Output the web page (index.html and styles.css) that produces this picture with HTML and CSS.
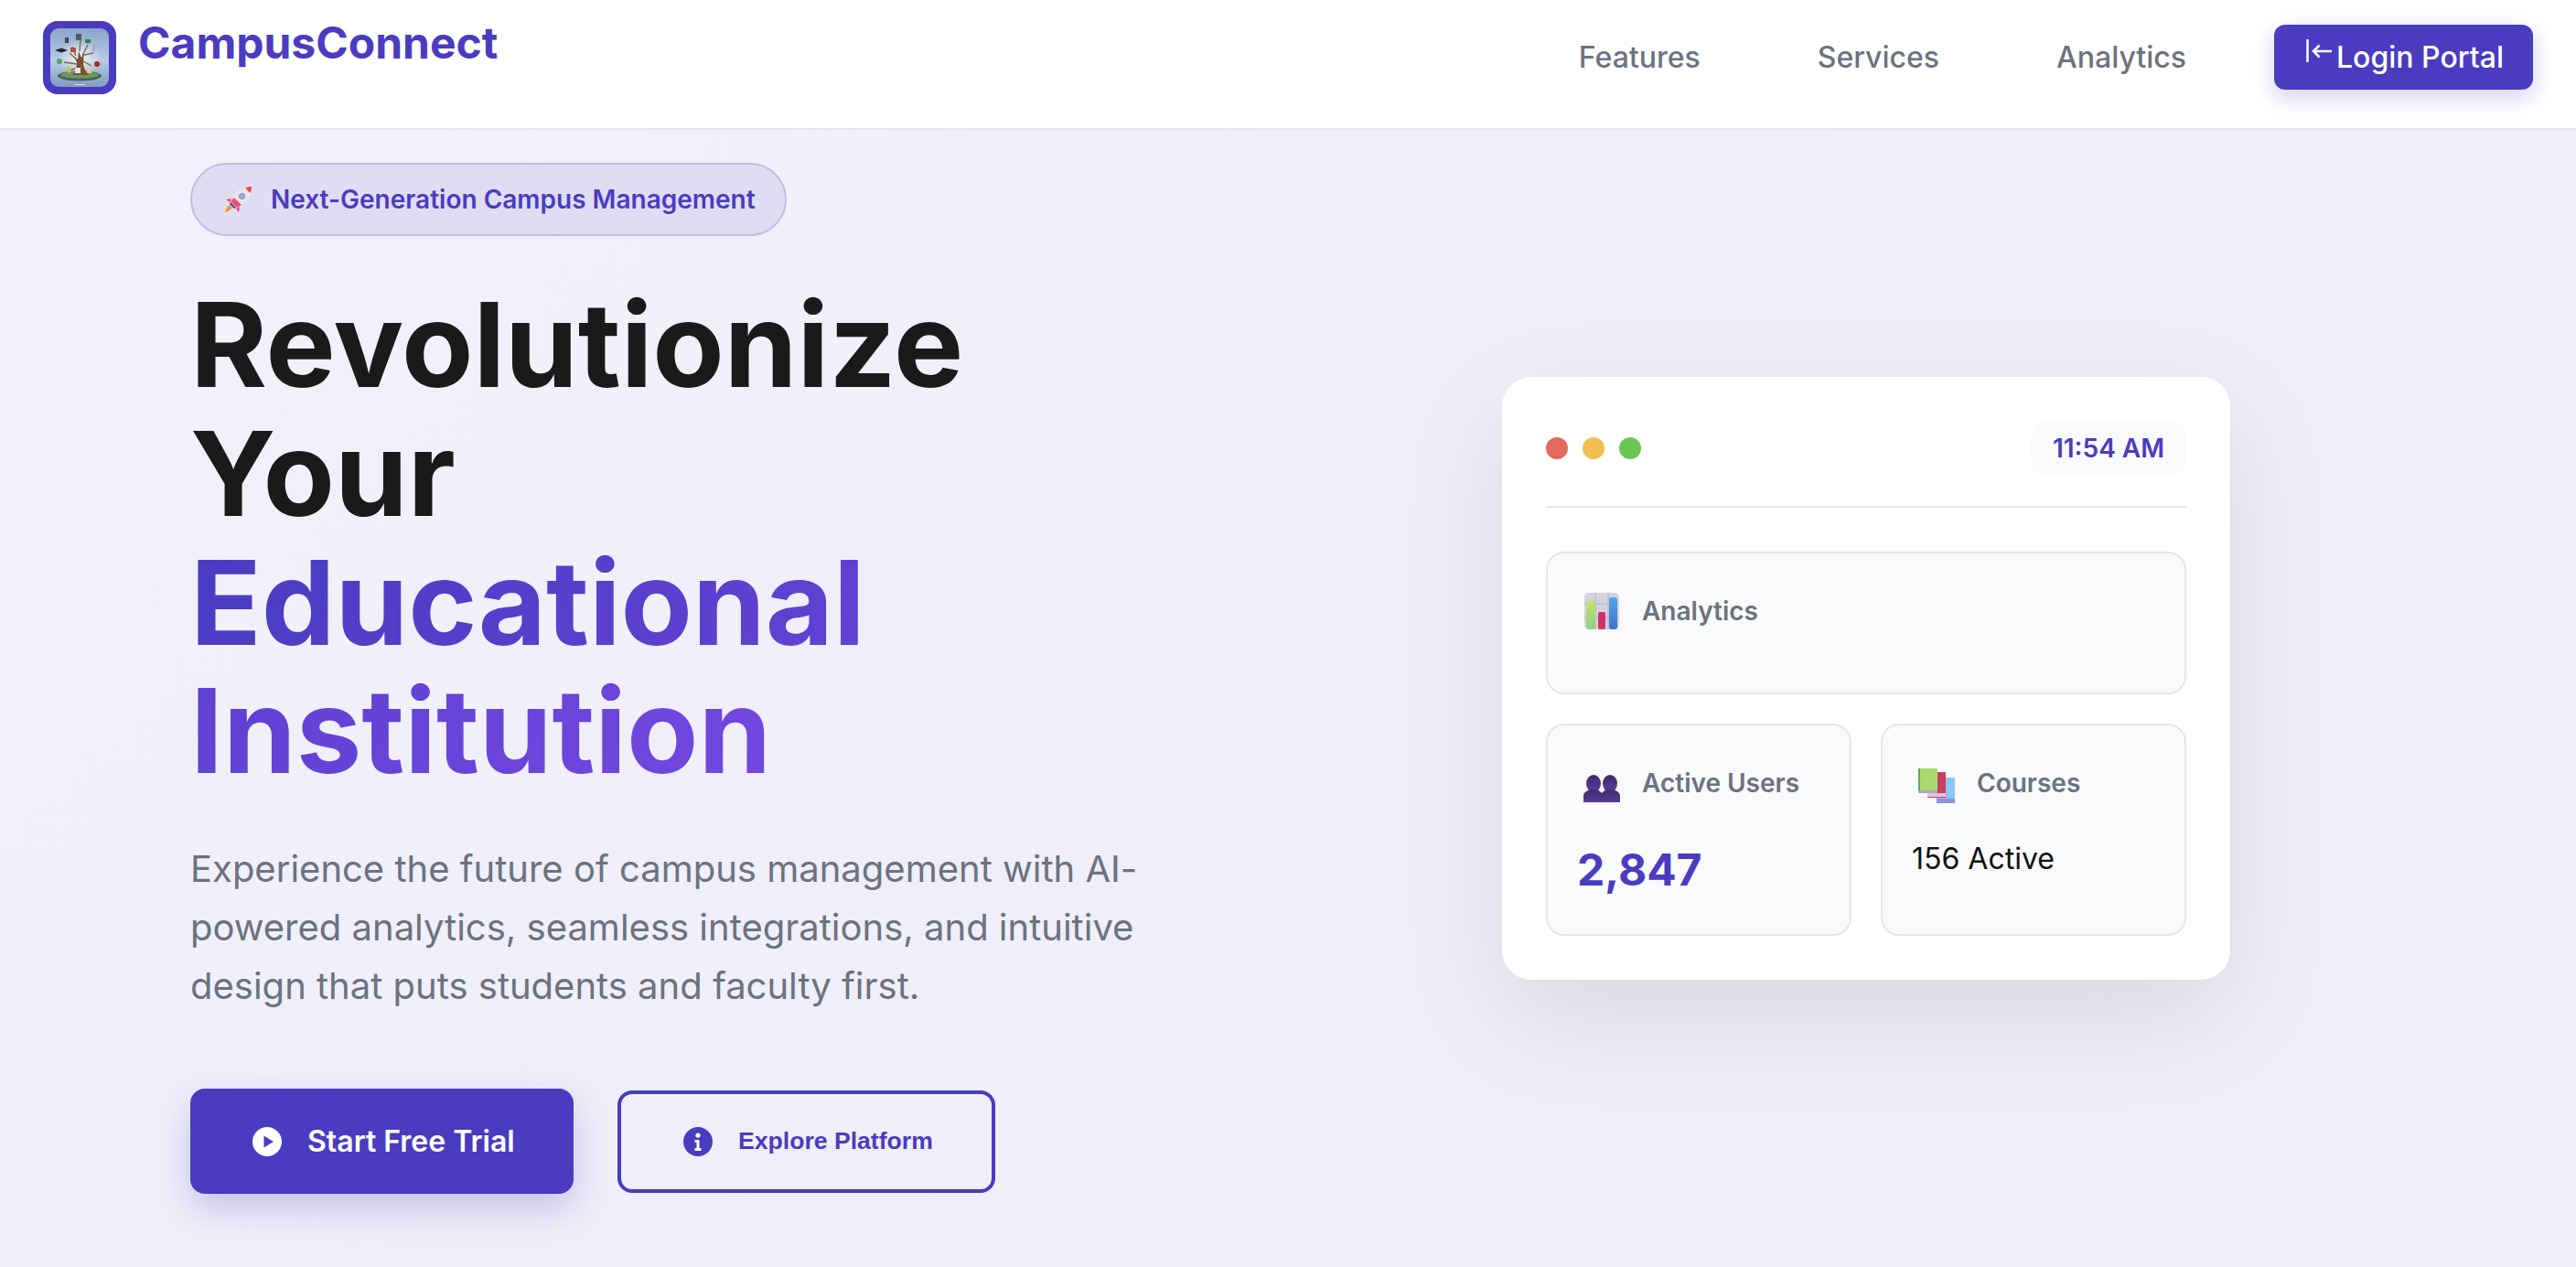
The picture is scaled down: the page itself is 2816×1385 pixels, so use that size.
FILE: index.html
```html
<!DOCTYPE html>
<html lang="en">
<head>
<meta charset="utf-8">
<title>CampusConnect</title>
<link rel="stylesheet" href="styles.css">
</head>
<body>
<header class="nav">
  <a class="brand">
    <span class="logo">
      <svg class="logo-art" viewBox="0 0 64 64" aria-hidden="true">
        <defs>
          <linearGradient id="sky" x1="0" y1="0" x2="0" y2="1"><stop offset="0" stop-color="#8aa6cc"/><stop offset=".55" stop-color="#b6cbe4"/><stop offset="1" stop-color="#7f9bc0"/></linearGradient>
          <radialGradient id="glow" cx=".5" cy=".5" r=".5"><stop offset="0" stop-color="#eef4fb"/><stop offset="1" stop-color="#eef4fb" stop-opacity="0"/></radialGradient>
        </defs>
        <rect width="64" height="64" rx="9" fill="url(#sky)"/>
        <ellipse cx="32" cy="32" rx="24" ry="20" fill="url(#glow)"/>
        <ellipse cx="32" cy="52" rx="24" ry="5.500" fill="#3f6a4a"/>
        <ellipse cx="32" cy="51" rx="21" ry="3.800" fill="#6f9466"/>
        <path d="M24 51c3-3 5-8 5-14l-3-6 4 3 1-9 3 7 3-5-1 10c0 6 3 11 7 14z" fill="#7a5230"/>
        <path d="M29 34 21 27M28 30 24 20M32 25 33 12M35 30 41 18M37 29 47 27M36 36 45 41M29 39 15 37M30 43 21 46" stroke="#8a6238" stroke-width="1.400" fill="none"/>
        <rect x="16" y="10" width="4" height="6" fill="#3d4a4d"/>
        <rect x="28" y="6" width="6" height="7" fill="#4f5d64"/>
        <rect x="38" y="12" width="6" height="4" fill="#3d7561"/>
        <path d="M5 24l7-2.500 7 2.500-7 2.500z" fill="#23262c"/>
        <rect x="22" y="21" width="6" height="5" fill="#c0453f"/>
        <rect x="46" y="17" width="3" height="9" fill="#a8acb4"/>
        <circle cx="51" cy="39" r="3" fill="#b3241f"/>
        <circle cx="10" cy="36" r="3" fill="#5d9f6a"/>
        <path d="M17 43l4-1 2 5-3 2z" fill="#e3bf3a"/>
        <rect x="40" y="43" width="5" height="6" fill="#d8cd98"/>
        <rect x="27" y="43" width="6" height="6" fill="#dfe6ea"/>
        <rect x="26" y="61" width="12" height="1" fill="#d5dfee"/>
      </svg>
    </span>
    <span class="brand-name">CampusConnect</span>
  </a>
  <nav class="nav-right">
    <a class="nav-link">Features</a>
    <a class="nav-link">Services</a>
    <a class="nav-link">Analytics</a>
    <a class="login">
      <svg class="login-icon" viewBox="0 0 28 26" aria-hidden="true"><path d="M1.500 0v25M28 13H8M14.500 6.500 8 13l6.500 6.500" fill="none" stroke="#fff" stroke-width="2.500"/></svg>
      <span>Login Portal</span>
    </a>
  </nav>
</header>

<main class="hero">
  <section class="hero-left">
    <div class="badge">
      <svg class="badge-icon" viewBox="0 0 30 30" aria-hidden="true">
        <path d="M29 1c-8 0-14 3-18 8l-4 8 6 6 8-4c5-4 8-10 8-18z" fill="#ece7ee"/>
        <path d="M29 1c-3 0-5 .6-7 1.500l5.500 5.500c1-2 1.500-4.500 1.500-7z" fill="#e8484f"/>
        <circle cx="18.500" cy="11.500" r="3" fill="#8ab4ea" stroke="#9c93b0" stroke-width="1.200"/>
        <path d="M7 14 1 15l4 3zM16 23l-1 6-3-4z" fill="#e8456f"/>
        <path d="M10 13l8 8-5 3-7-7z" fill="#ea4f7c"/>
        <path d="M6 18l6 6-2 1-5-5z" fill="#4a3f6a"/>
        <path d="M5 21c-3 1-4 4-5 8 3-1 6-2 8-5z" fill="#f39a2b"/>
      </svg>
      <span>Next-Generation Campus Management</span>
    </div>
    <h1 class="title">Revolutionize Your <span class="title-accent">Educational Institution</span></h1>
    <p class="lead">Experience the future of campus management with AI-powered analytics, seamless integrations, and intuitive design that puts students and faculty first.</p>
    <div class="actions">
      <a class="btn-primary">
        <svg class="btn-icon" viewBox="0 0 32 32" aria-hidden="true"><circle cx="16" cy="16" r="16" fill="#fff"/><path d="M12.500 9.500 23 16l-10.500 6.500z" fill="#4a3bc1"/></svg>
        <span>Start Free Trial</span>
      </a>
      <button class="btn-outline" type="button">
        <svg class="btn-icon" viewBox="0 0 32 32" aria-hidden="true"><circle cx="16" cy="16" r="16" fill="#4a3bc1"/><circle cx="16" cy="9" r="2.600" fill="#fff"/><path d="M12.500 14h5v9h2v3h-7v-3h2v-6h-2z" fill="#fff"/></svg>
        <span>Explore Platform</span>
      </button>
    </div>
  </section>

  <section class="hero-right">
    <div class="panel">
      <div class="panel-head">
        <div class="dots"><span class="dot dot-red"></span><span class="dot dot-yellow"></span><span class="dot dot-green"></span></div>
        <div class="clock">11:54 AM</div>
      </div>
      <div class="tiles">
        <div class="tile tile-wide">
          <div class="tile-head">
            <svg class="tile-icon" viewBox="0 0 40 40" aria-hidden="true">
              <defs>
                <linearGradient id="barG" x1="0" y1="0" x2="0" y2="1"><stop offset="0" stop-color="#c3e36a"/><stop offset="1" stop-color="#8fd08a"/></linearGradient>
                <linearGradient id="barB" x1="0" y1="0" x2="0" y2="1"><stop offset="0" stop-color="#55a3ee"/><stop offset="1" stop-color="#3f74c8"/></linearGradient>
              </defs>
              <rect x="1" y="0" width="38" height="40" rx="5" fill="#d5d1de"/>
              <path d="M1 12h38M1 27h38M13 0v40M27 0v40" stroke="#b5b0c2" stroke-width="1"/>
              <rect x="3" y="9" width="10" height="31" rx="3" fill="url(#barG)"/>
              <rect x="16" y="21" width="8" height="19" rx="2" fill="#cc3468"/>
              <rect x="28" y="5" width="9" height="35" rx="3" fill="url(#barB)"/>
            </svg>
            <span class="tile-label">Analytics</span>
          </div>
        </div>
        <div class="tile">
          <div class="tile-head">
            <svg class="tile-icon tile-icon-users" viewBox="0 0 40 30" aria-hidden="true">
              <defs>
                <linearGradient id="userG" x1="0" y1="0" x2="0" y2="1"><stop offset="0" stop-color="#3f2a72"/><stop offset="1" stop-color="#5a3c96"/></linearGradient>
              </defs>
              <g fill="url(#userG)">
                <ellipse cx="11" cy="9.500" rx="8" ry="9.500"/>
                <ellipse cx="29" cy="9.500" rx="8" ry="9.500"/>
                <path d="M0 30v-7c0-4 5-7 11-7 4 0 7 1.500 9 4 2-2.500 5-4 9-4 6 0 11 3 11 7v7z"/>
              </g>
            </svg>
            <span class="tile-label">Active Users</span>
          </div>
          <div class="stat">2,847</div>
        </div>
        <div class="tile">
          <div class="tile-head">
            <svg class="tile-icon tile-icon-books" viewBox="0 0 40 38" aria-hidden="true">
              <rect x="20" y="10" width="20" height="28" fill="#8ac8f2"/>
              <rect x="20" y="33" width="20" height="5" fill="#8a94d8"/>
              <rect x="10" y="4" width="20" height="28" fill="#c83f66"/>
              <rect x="10" y="27" width="20" height="4" fill="#e6c6d4"/>
              <rect x="0" y="0" width="21" height="27" fill="#a8d86f"/>
              <rect x="0" y="0" width="2" height="27" fill="#6aa45a"/>
              <rect x="0" y="24" width="21" height="3" fill="#a9a6bd"/>
            </svg>
            <span class="tile-label">Courses</span>
          </div>
          <div class="plain">156 Active</div>
        </div>
      </div>
    </div>
  </section>
</main>
</body>
</html>
```
FILE: styles.css
```css
* { box-sizing: border-box; }
html, body { margin: 0; height: 100%; }
body {
  font-family: "Inter", "Liberation Sans", sans-serif;
  color: #1a1a1a;
  background: #f0eefa;
  overflow: hidden;
}
.nav {
  display: flex;
  justify-content: space-between;
  align-items: flex-start;
  height: 142px;
  padding: 23px 47px 0;
  background: #fff;
  border-bottom: 2px solid #e5e7eb;
}
.brand { display: flex; align-items: flex-start; gap: 24px; }
.logo {
  display: block;
  width: 80px;
  height: 80px;
  padding: 8px;
  border-radius: 16px;
  background: #4a3bc1;
}
.logo-art { display: block; width: 64px; height: 64px; }
.brand-name {
  font-size: 48px;
  line-height: 1;
  font-weight: 700;
  color: #4a3bc1;
}
.nav-right {
  display: flex;
  align-items: center;
  height: 79px;
  gap: 128px;
}
.nav-link {
  font-size: 32px;
  font-weight: 500;
  color: #6b7280;
}
.login {
  display: flex;
  align-items: center;
  width: 283px;
  height: 71px;
  padding-left: 35px;
  margin-left: -32px;
  border-radius: 12px;
  background: #4a3bc1;
  color: #fff;
  font-size: 32px;
  font-weight: 500;
  box-shadow: 0 8px 24px rgba(74, 59, 193, .25);
}
.login-icon { flex: none; width: 28px; height: 26px; margin: -14px 5px 0 0; }

.hero {
  display: grid;
  grid-template-columns: 1040px 1fr;
  gap: 0;
  height: 1243px;
  padding: 36px 0 0 208px;
  background: linear-gradient(135deg, #f2f2fb 0%, #efeef9 50%, #f0eefa 100%);
}
.hero-left { min-width: 0; }
.badge {
  display: inline-flex;
  align-items: center;
  gap: 20px;
  height: 80px;
  padding: 0 32px 0 36px;
  border: 2px solid #c3bce8;
  border-radius: 40px;
  background: #e0ddf2;
  color: #4a3bc1;
  font-size: 28px;
  font-weight: 600;
}
.badge-icon { width: 30px; height: 30px; }
.title {
  margin: 49px 0 48px;
  font-size: 128px;
  line-height: 140.800px;
  font-weight: 700;
  color: #1a1a1a;
  max-width: 900px;
}
.title-accent {
  background: linear-gradient(135deg, #4a3bc1 0%, #7447e2 100%);
  -webkit-background-clip: text;
  background-clip: text;
  color: transparent;
}
.lead {
  margin: 0 0 80px;
  max-width: 1040px;
  font-size: 40px;
  line-height: 64px;
  color: #6b7280;
}
.actions { display: flex; align-items: center; gap: 48px; }
.btn-primary {
  display: flex;
  align-items: center;
  gap: 28px;
  width: 419px;
  height: 115px;
  padding-left: 68px;
  border-radius: 16px;
  background: #4a3bc1;
  color: #fff;
  font-size: 32px;
  font-weight: 600;
  box-shadow: 0 16px 40px rgba(74, 59, 193, .25);
}
.btn-outline {
  display: flex;
  align-items: center;
  gap: 28px;
  width: 413px;
  height: 112px;
  padding: 0 0 0 68px;
  border: 4px solid #4a3bc1;
  border-radius: 16px;
  background: transparent;
  color: #4a3bc1;
  font-family: "Liberation Sans", Arial, sans-serif;
  font-size: 26.600px;
  font-weight: 700;
}
.btn-icon { width: 32px; height: 32px; flex: none; }

.hero-right { display: flex; justify-content: center; padding: 234px 0 0 0; margin-left: 394px; width: 796px; }
.panel {
  width: 796px;
  height: 659px;
  padding: 48px;
  border-radius: 32px;
  background: #fff;
  box-shadow: 0 40px 120px rgba(0, 0, 0, .1);
}
.panel-head {
  display: flex;
  justify-content: space-between;
  align-items: center;
  height: 95px;
  padding-bottom: 33px;
  border-bottom: 2px solid #e5e7eb;
}
.dots { display: flex; gap: 16px; }
.dot { width: 24px; height: 24px; border-radius: 50%; }
.dot-red { background: #e5695c; }
.dot-yellow { background: #f0bf50; }
.dot-green { background: #6cc655; }
.clock {
  display: flex;
  align-items: center;
  justify-content: center;
  width: 170px;
  height: 60px;
  border-radius: 16px;
  background: #f9fafb;
  color: #4a3bc1;
  font-size: 28px;
  font-weight: 600;
}
.tiles {
  display: grid;
  grid-template-columns: 1fr 1fr;
  gap: 32px;
  margin-top: 48px;
}
.tile {
  height: 232px;
  padding: 32px;
  border: 2px solid #e5e7eb;
  border-radius: 20px;
  background: #f9fafb;
}
.tile-wide { grid-column: 1 / 3; height: 156px; }
.tile-head { display: flex; align-items: center; height: 62px; padding-left: 7px; gap: 24px; }
.tile-icon { width: 40px; height: 40px; flex: none; }
.tile-icon-users { height: 30px; margin-top: 12px; }
.tile-icon-books { height: 38px; margin-top: 6px; }
.tile-label { font-size: 28px; font-weight: 600; color: #6b7280; }
.stat { margin-top: 35px; font-size: 48px; line-height: 58px; font-weight: 700; color: #4a3bc1; }
.plain { margin-top: 33px; font-size: 32px; line-height: 38px; color: #111; }
```
